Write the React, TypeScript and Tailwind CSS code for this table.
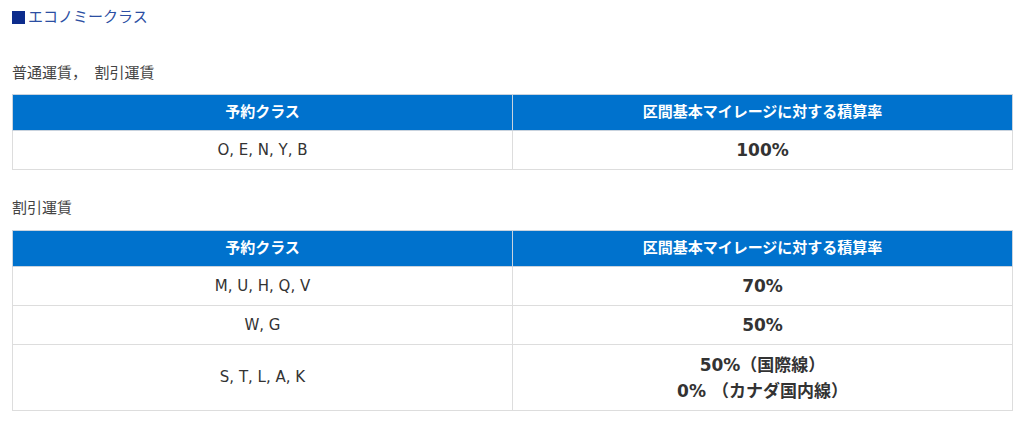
import React from 'react';

const font = { fontFamily: '"DejaVu Sans", "Noto Sans CJK JP", sans-serif' };

type Row = { classes: string; rate: string[]; tall?: boolean };

const RateTable: React.FC<{ rows: Row[] }> = ({ rows }) => (
  <table className="w-full border-collapse table-fixed text-[15px] text-[#333]">
    <thead>
      <tr className="bg-[#0072cd] text-white h-[36px]">
        <th className="border border-[#c9d3de] font-bold">予約クラス</th>
        <th className="border border-[#c9d3de] font-bold">区間基本マイレージに対する積算率</th>
      </tr>
    </thead>
    <tbody>
      {rows.map((r, i) => (
        <tr key={i} className={r.tall ? 'h-[66px]' : 'h-[39px]'}>
          <td className="border border-[#dddddd] text-center">{r.classes}</td>
          <td className="border border-[#dddddd] text-center font-bold text-[17px] leading-[26px]">
            {r.rate.map((t, j) => (
              <div key={j}>{t}</div>
            ))}
          </td>
        </tr>
      ))}
    </tbody>
  </table>
);

export default function App() {
  return (
    <div className="bg-white w-[1024px] h-[423px] pl-[12px] pr-[11px] pt-[6px]" style={font}>
      <div className="flex items-center gap-[3px] text-[15px] text-[#2b4ea2] h-[22px]">
        <span className="inline-block w-[13px] h-[13px] bg-[#0c2c8c]" />
        <span>エコノミークラス</span>
      </div>
      <div className="mt-[34px] text-[15px] text-[#444] h-[22px]">普通運賃，　割引運賃</div>
      <div className="mt-[10px]">
        <RateTable rows={[{ classes: 'O, E, N, Y, B', rate: ['100%'] }]} />
      </div>
      <div className="mt-[27px] text-[15px] text-[#444] h-[22px]">割引運賃</div>
      <div className="mt-[11px]">
        <RateTable
          rows={[
            { classes: 'M, U, H, Q, V', rate: ['70%'] },
            { classes: 'W, G', rate: ['50%'] },
            { classes: 'S, T, L, A, K', rate: ['50%（国際線）', '0% （カナダ国内線）'], tall: true },
          ]}
        />
      </div>
    </div>
  );
}
